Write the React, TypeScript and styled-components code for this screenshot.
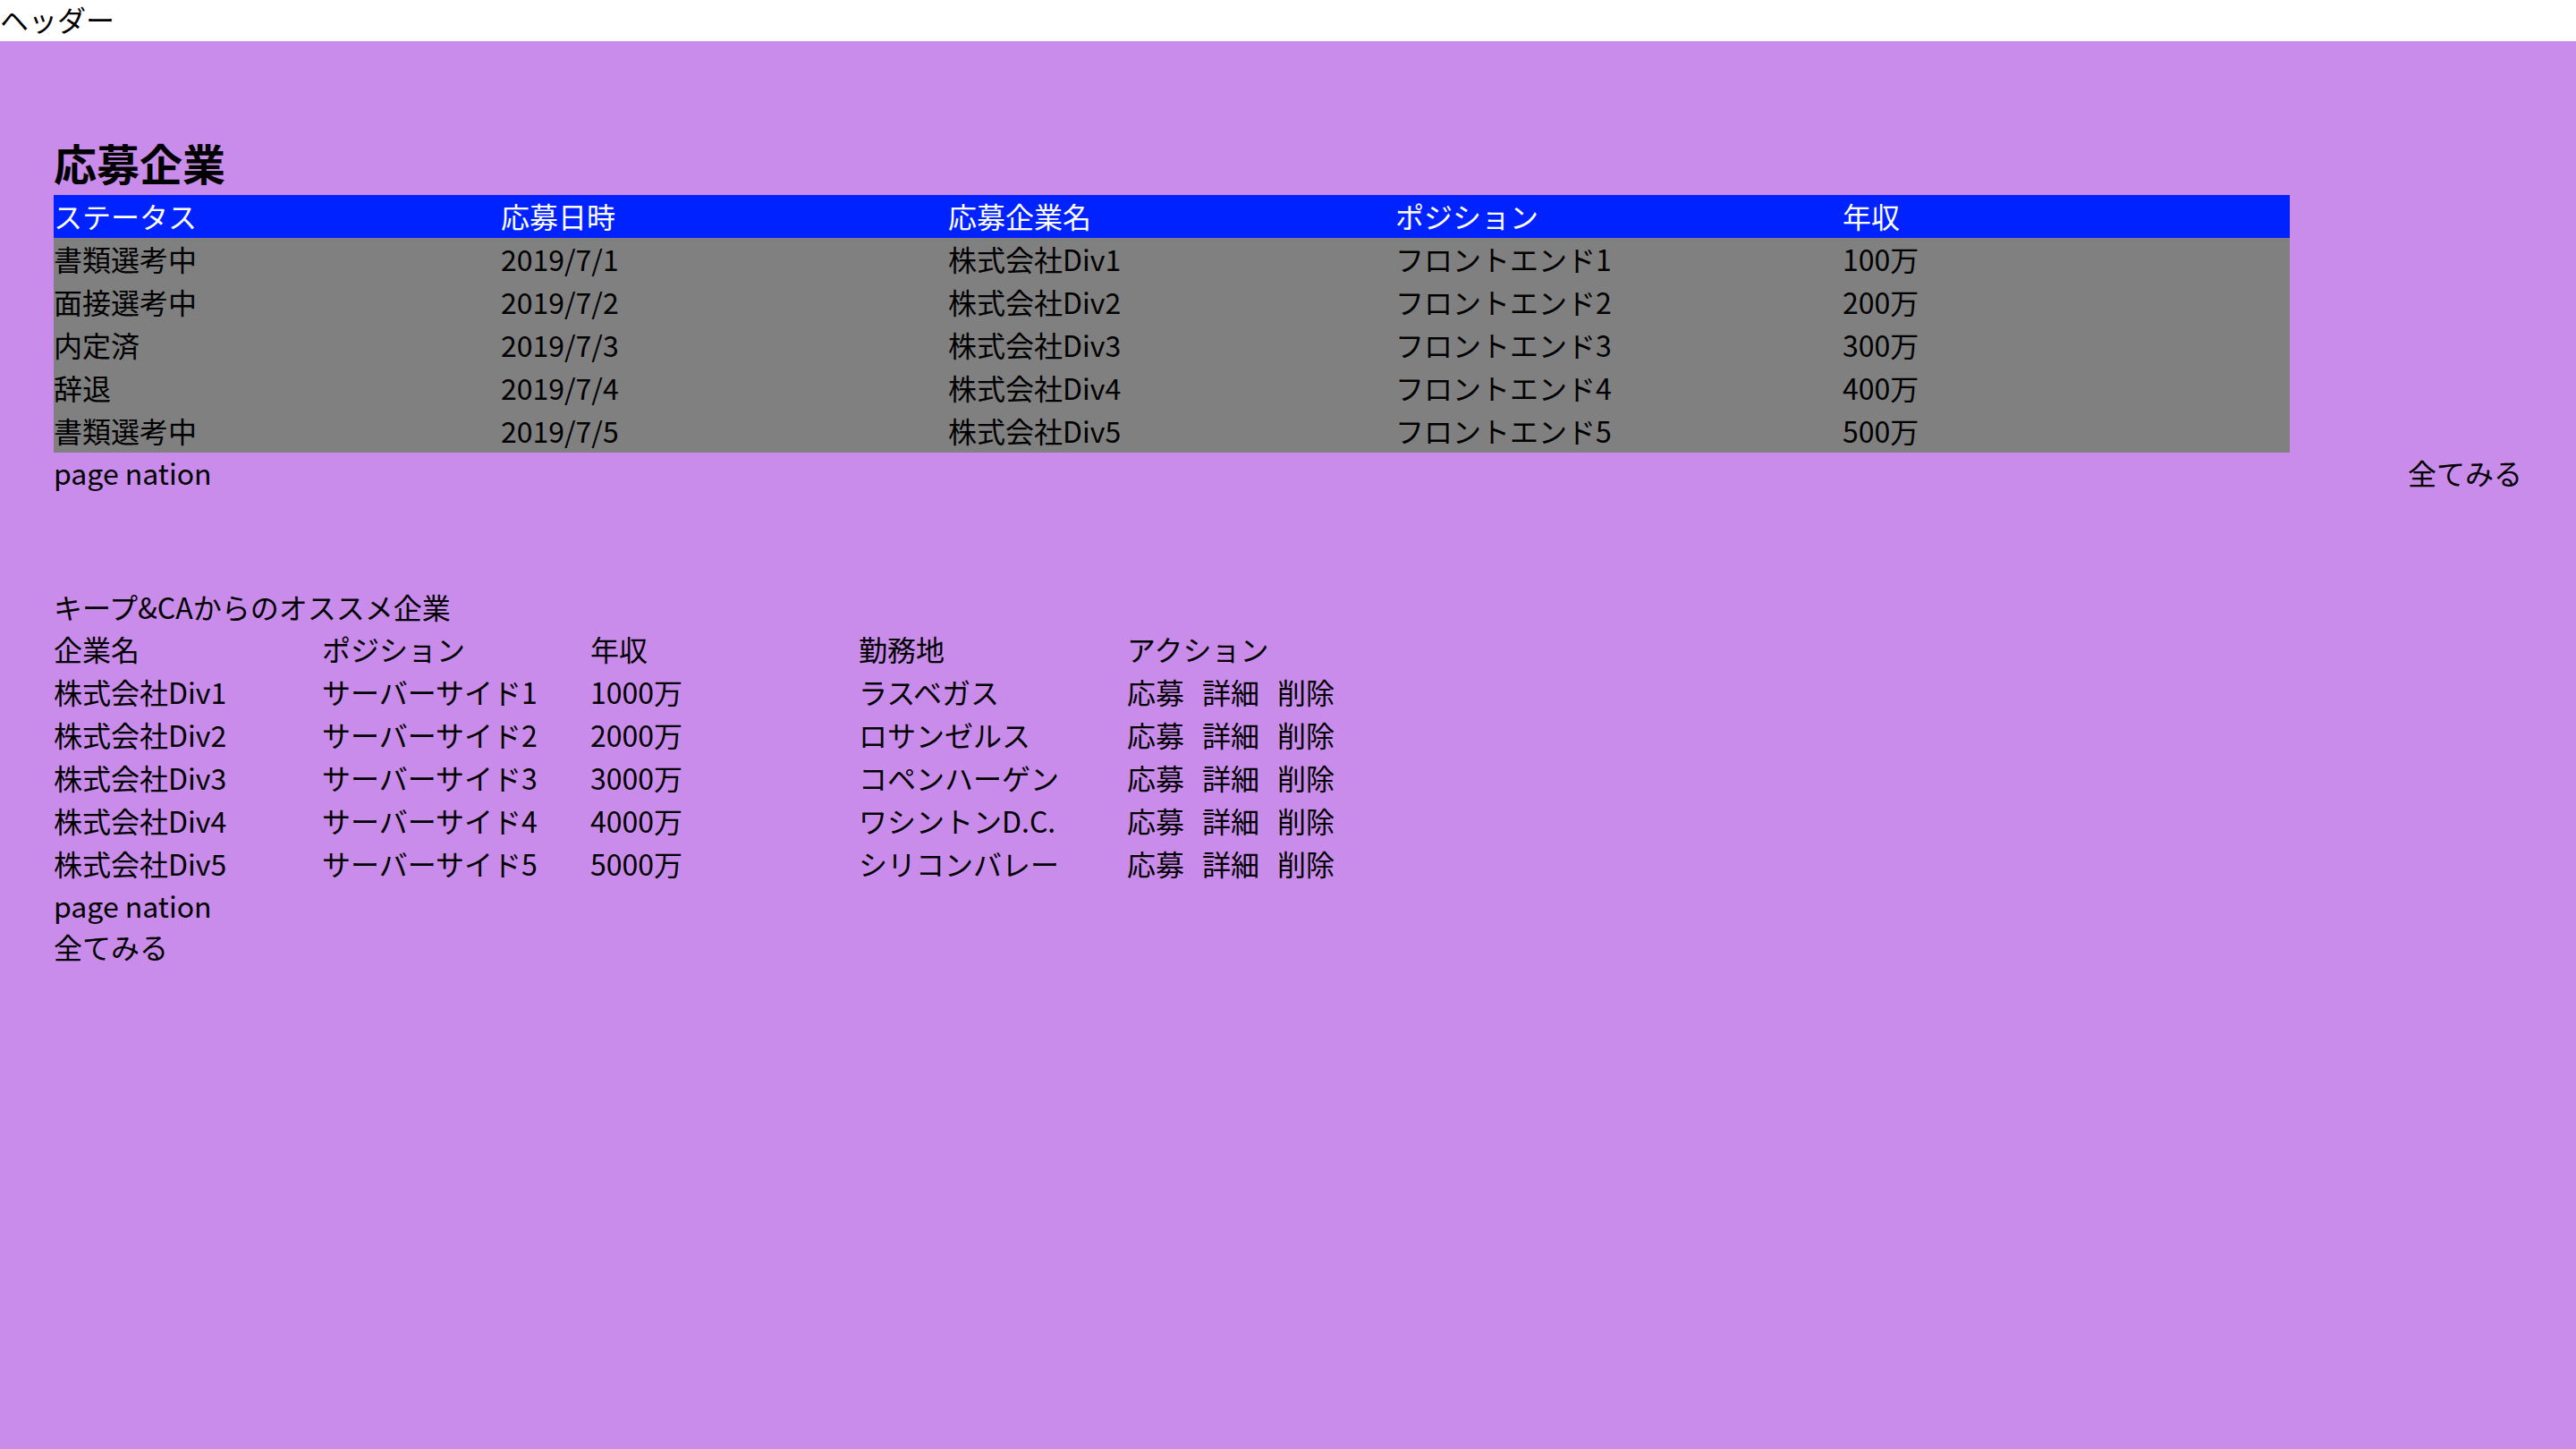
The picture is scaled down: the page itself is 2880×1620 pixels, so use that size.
import styled, { createGlobalStyle } from "styled-components"

const GlobalStyle = createGlobalStyle`
    html, body {
        margin: 0;
        padding: 0;
        min-height: 100%;
    }
    body {
        background-color: #ca8ceb;
        font-family: "Noto Sans CJK JP", "Noto Sans", sans-serif;
        font-size: 32px;
        line-height: 46px;
        color: #000;
    }
`

const Header = styled.header`
    height: 46px;
    box-sizing: border-box;
    padding-bottom: 3px;
    background-color: #fff;
    font-size: 32px;
    line-height: 43px;
`

const Main = styled.main`
    padding: 0 60px 60px;
`

const Title = styled.h2`
    margin: 102px 0 0;
    padding-bottom: 4px;
    font-size: 48px;
    line-height: 66px;
    font-weight: 700;
`

const Table = styled.table<{ $width: number }>`
    width: ${(p) => p.$width}px;
    border-collapse: collapse;
    border-spacing: 0;
    table-layout: fixed;
    font-size: 32px;
    line-height: 46px;
`

const HeadRow = styled.tr<{ $bg?: string; $color?: string }>`
    background-color: ${(p) => p.$bg || "transparent"};
    color: ${(p) => p.$color || "#000"};
`

const BodyRow = styled.tr<{ $bg?: string }>`
    background-color: ${(p) => p.$bg || "transparent"};
`

const Th = styled.th`
    padding: 0 0 2px;
    text-align: left;
    font-weight: 400;
    white-space: nowrap;
`

const Td = styled.td`
    padding: 0 0 2px;
    white-space: nowrap;
`

const Actions = styled.div`
    display: flex;
    gap: 20px;
`

const FooterRow = styled.div`
    display: flex;
    justify-content: space-between;
    height: 46px;
    line-height: 44px;
`

const LinkText = styled.span`
    cursor: pointer;
`

const Section = styled.section`
    margin-top: 104px;
`

const SectionLabel = styled.div`
    height: 46px;
    line-height: 44px;
`

const applied = [
    { status: "書類選考中", date: "2019/7/1", company: "株式会社Div1", position: "フロントエンド1", salary: "100万" },
    { status: "面接選考中", date: "2019/7/2", company: "株式会社Div2", position: "フロントエンド2", salary: "200万" },
    { status: "内定済", date: "2019/7/3", company: "株式会社Div3", position: "フロントエンド3", salary: "300万" },
    { status: "辞退", date: "2019/7/4", company: "株式会社Div4", position: "フロントエンド4", salary: "400万" },
    { status: "書類選考中", date: "2019/7/5", company: "株式会社Div5", position: "フロントエンド5", salary: "500万" },
]

const recommended = [
    { company: "株式会社Div1", position: "サーバーサイド1", salary: "1000万", place: "ラスベガス" },
    { company: "株式会社Div2", position: "サーバーサイド2", salary: "2000万", place: "ロサンゼルス" },
    { company: "株式会社Div3", position: "サーバーサイド3", salary: "3000万", place: "コペンハーゲン" },
    { company: "株式会社Div4", position: "サーバーサイド4", salary: "4000万", place: "ワシントンD.C." },
    { company: "株式会社Div5", position: "サーバーサイド5", salary: "5000万", place: "シリコンバレー" },
]

export default function App() {
    return (
        <>
            <GlobalStyle />
            <Header>ヘッダー</Header>
            <Main>
                <Title>応募企業</Title>
                <Table $width={2500}>
                    <thead>
                        <HeadRow $bg="#0022ff" $color="#fff">
                            <Th>ステータス</Th>
                            <Th>応募日時</Th>
                            <Th>応募企業名</Th>
                            <Th>ポジション</Th>
                            <Th>年収</Th>
                        </HeadRow>
                    </thead>
                    <tbody>
                        {applied.map((row, i) => (
                            <BodyRow key={i} $bg="#808080">
                                <Td>{row.status}</Td>
                                <Td>{row.date}</Td>
                                <Td>{row.company}</Td>
                                <Td>{row.position}</Td>
                                <Td>{row.salary}</Td>
                            </BodyRow>
                        ))}
                    </tbody>
                </Table>
                <FooterRow>
                    <LinkText>page nation</LinkText>
                    <LinkText>全てみる</LinkText>
                </FooterRow>

                <Section>
                    <SectionLabel>キープ&CAからのオススメ企業</SectionLabel>
                    <Table $width={1500}>
                        <thead>
                            <HeadRow>
                                <Th>企業名</Th>
                                <Th>ポジション</Th>
                                <Th>年収</Th>
                                <Th>勤務地</Th>
                                <Th>アクション</Th>
                            </HeadRow>
                        </thead>
                        <tbody>
                            {recommended.map((row, i) => (
                                <BodyRow key={i}>
                                    <Td>{row.company}</Td>
                                    <Td>{row.position}</Td>
                                    <Td>{row.salary}</Td>
                                    <Td>{row.place}</Td>
                                    <Td>
                                        <Actions>
                                            <LinkText>応募</LinkText>
                                            <LinkText>詳細</LinkText>
                                            <LinkText>削除</LinkText>
                                        </Actions>
                                    </Td>
                                </BodyRow>
                            ))}
                        </tbody>
                    </Table>
                    <SectionLabel>page nation</SectionLabel>
                    <SectionLabel>全てみる</SectionLabel>
                </Section>
            </Main>
        </>
    )
}
